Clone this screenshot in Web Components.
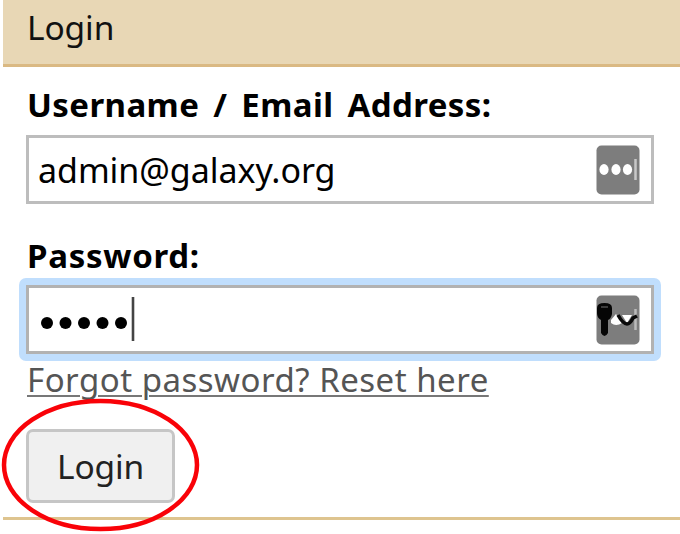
<!DOCTYPE html>
<html lang="en">
<head>
<meta charset="utf-8">
<title>Login</title>
<style>
body { margin: 0; min-height: 534px; background: #fff; color: #000; font-family: "Noto Sans", "Open Sans", sans-serif; font-size: 34px; }
</style>
</head>
<body>
<login-panel></login-panel>
<script>
const define = (name, html) => customElements.define(name, class extends HTMLElement {
  constructor() {
    super();
    this.attachShadow({ mode: 'open' }).innerHTML = html;
  }
});

define('panel-header', `
<style>
:host { display: block; box-sizing: border-box; height: 67px; padding-left: 24px; background: #e8d7b5; border-bottom: 3px solid #dab983; line-height: 55px; font-size: 33.5px; letter-spacing: -0.1px; color: #111; }
</style><slot></slot>`);

define('field-label', `
<style>
:host { display: block; height: 50px; line-height: 51px; padding-left: 1px; font-weight: 700; font-size: 33px; letter-spacing: var(--track, 0); word-spacing: 5px; white-space: nowrap; }
</style><slot></slot>`);

define('text-field', `
<style>
:host { display: flex; box-sizing: border-box; align-items: center; justify-content: space-between; width: 628px; height: 69px; padding: 0 11px 0 9px; border: 3px solid #bdbdbd; background: #fff; white-space: nowrap; letter-spacing: -0.05px; line-height: 60px; }
:host([focused]) { border-color: #b2b2b2; }
</style><slot></slot><slot name="icon"></slot>`);

define('focus-ring', `
<style>
:host { display: block; padding: 7px; border-radius: 7px; background: #c0defd; }
</style><slot></slot>`);

define('password-dots', `
<style>:host { display: block; width: 110px; height: 46px; } svg { display: block; }</style>
<svg width="110" height="46"><g fill="#000"><circle cx="9" cy="26" r="6"/><circle cx="27.500" cy="26" r="6"/><circle cx="46" cy="26" r="6"/><circle cx="64.500" cy="26" r="6"/><circle cx="83" cy="26" r="6"/></g><path d="M95 0V44" stroke="#444" stroke-width="2.600"/></svg>`);

define('manager-icon', `
<style>
:host { display: block; width: 44px; height: 50px; }
svg { display: block; }
.key { display: none; }
:host([key]) .key { display: inline; }
:host([key]) .dots { display: none; }
</style>
<svg width="44" height="50" viewBox="0 0 44 50">
<rect x=".5" y=".5" width="43" height="49" rx="5" fill="#7d7d7d"/>
<g class="dots"><g fill="#fff"><ellipse cx="8" cy="24.500" rx="4.600" ry="5.400"/><ellipse cx="20" cy="24.500" rx="4.600" ry="5.400"/><ellipse cx="31.500" cy="24.500" rx="4.600" ry="5.400"/></g><path d="M39.500 14V35" stroke="#c8c8c8" stroke-width="2.500"/></g>
<g class="key"><path d="M39.500 14V35" stroke="#bbb" stroke-width="2.500"/><path d="M15 25L20 19L26 28Q20 32 15 28ZM26 20H36L31 28Z" fill="#fff"/>
<path d="M1 13Q1 8 8.500 8T16 13V19Q15 24 12 25V38Q8.500 44 5 38V25Q1 23 1 18Z" fill="#050505"/><path d="M5 12H12" stroke="#3b3b3b" stroke-width="2"/>
<path d="M22 20Q27 29 31 29Q34 29 37 23L41 21" fill="none" stroke="#080808" stroke-width="3.600"/></g>
</svg>`);

define('reset-link', `
<style>
:host { display: block; width: 461px; height: 39px; line-height: 37px; font-size: 33px; color: #555; white-space: nowrap; letter-spacing: .5px; }
span { text-decoration: underline; text-decoration-thickness: 2px; text-underline-offset: 3px; text-decoration-color: #777; }
</style><span><slot></slot></span>`);

define('push-button', `
<style>
:host { display: flex; box-sizing: border-box; position: relative; align-items: center; justify-content: center; width: 149px; height: 74px; border: 3px solid #c6c6c6; border-radius: 7px; background: #f0f0f0; color: #222; font-size: 33.5px; letter-spacing: -0.2px; line-height: 60px; }
.ring { position: absolute; left: -29px; top: -34px; }
</style><slot></slot>
<svg class="ring" width="202" height="136"><ellipse cx="100.500" cy="67" rx="96.500" ry="64" fill="none" stroke="#f90208" stroke-width="4.500"/></svg>`);

define('login-panel', `
<style>
:host { display: block; box-sizing: border-box; margin-left: 3px; height: 520px; border-bottom: 3px solid #dec48f; }
main { display: flex; flex-direction: column; align-items: flex-start; padding: 12px 0 0 23px; }
text-field { margin-top: 6px; }
.second { margin-top: 26px; }
focus-ring { margin: -2px 0 0 -7px; }
focus-ring text-field { margin: 0; }
reset-link { margin-left: 1px; }
push-button { margin-top: 29px; }
</style>
<panel-header>Login</panel-header>
<main>
<field-label style="--track:.4px">Username / Email Address:</field-label>
<text-field><span>admin@galaxy.org</span><manager-icon slot="icon"></manager-icon></text-field>
<field-label class="second" style="--track:.7px">Password:</field-label>
<focus-ring><text-field focused><password-dots></password-dots><manager-icon key slot="icon"></manager-icon></text-field></focus-ring>
<reset-link>Forgot password? Reset here</reset-link>
<push-button>Login</push-button>
</main>`);
</script>
</body>
</html>
